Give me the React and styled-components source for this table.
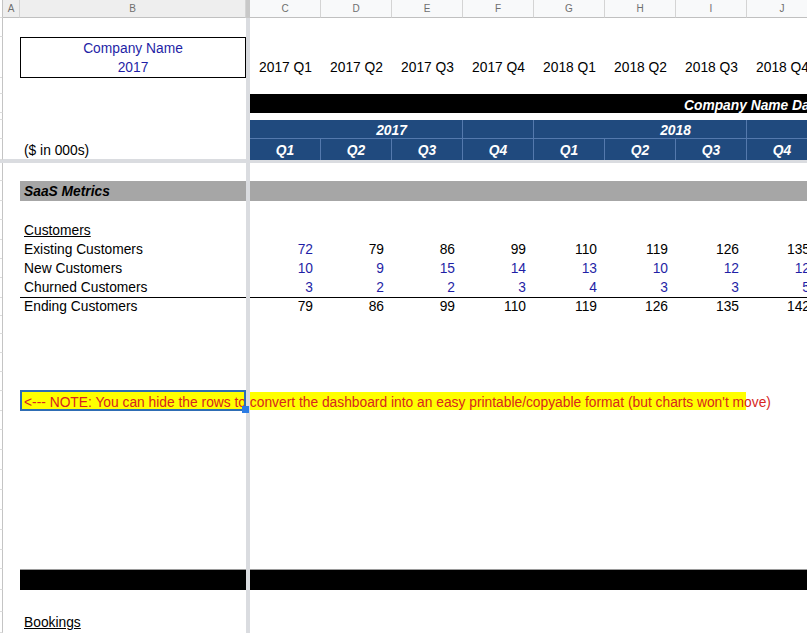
import React from 'react';
import styled, { createGlobalStyle } from 'styled-components';

const GlobalStyle = createGlobalStyle`
  html, body {
    margin: 0;
    padding: 0;
    background: #fff;
    overflow: hidden;
  }
  body {
    font-family: "Liberation Sans", Arial, sans-serif;
    font-size: 13.8px;
    color: #000;
  }
`;

const INPUT_BLUE = '#1f1fa6';
const NAVY = '#204a7e';
const NAVY_LINE = '#5479ad';

const columns = ['C', 'D', 'E', 'F', 'G', 'H', 'I', 'J'];
const periods = ['2017 Q1', '2017 Q2', '2017 Q3', '2017 Q4', '2018 Q1', '2018 Q2', '2018 Q3', '2018 Q4'];

const metrics = [
    { label: 'Existing Customers', values: [72, 79, 86, 99, 110, 119, 126, 135], inputs: 1 },
    { label: 'New Customers', values: [10, 9, 15, 14, 13, 10, 12, 12], inputs: 8 },
    { label: 'Churned Customers', values: [3, 2, 2, 3, 4, 3, 3, 5], inputs: 8, ruled: true },
    { label: 'Ending Customers', values: [79, 86, 99, 110, 119, 126, 135, 142], inputs: 0 },
];

const Sheet = styled.div`
    width: 807px;
    height: 633px;
    overflow: hidden;
    background: #fff;
`;

const Row = styled.div`
    display: grid;
    grid-template-columns: 3px 17px 226px 4px repeat(8, 71px);
    width: 818px;
    height: ${p => p.$h}px;
`;

const Stub = styled.div`
    grid-column: 1;
    grid-row: 1;
    border-right: 1px solid #c4c4c4;
    border-bottom: 1px solid #dcdcdc;
    box-sizing: border-box;
`;

const ColHead = styled.div`
    display: flex;
    align-items: center;
    justify-content: center;
    background: ${p => (p.$frozen ? '#eeeeee' : '#f8f9fa')};
    border-right: 1px solid #d4d4d4;
    border-bottom: 1px solid #c0c0c0;
    box-sizing: border-box;
    font-size: 10px;
    color: #6f6f6f;
`;

const Freeze = styled.div`
    grid-column: 4;
    grid-row: 1;
    background: ${p => (p.$head ? '#c8c8c8' : '#dadce0')};
    z-index: 1;
`;

const FreezeLine = styled.div`
    height: 4px;
    width: 807px;
    background: #dadce0;
`;

const Cell = styled.div`
    display: flex;
    align-items: center;
    justify-content: ${p => (p.$num ? 'flex-end' : 'flex-start')};
    padding: ${p => (p.$num ? '1px 8px 0 0' : `${p.$top ?? 1}px 0 0 4px`)};
    color: ${p => p.$color || '#000'};
    text-decoration: ${p => (p.$underline ? 'underline' : 'none')};
    border-bottom: ${p => (p.$ruled ? '1px solid #000' : 'none')};
    box-sizing: border-box;
    white-space: nowrap;
    line-height: 19px;
    min-width: 0;
`;

const TitleBox = styled.div`
    display: flex;
    flex-direction: column;
    align-items: center;
    justify-content: center;
    padding-top: 1px;
    border: 1px solid #000;
    color: ${INPUT_BLUE};
    line-height: 19px;
`;

const Period = styled.div`
    display: flex;
    align-items: flex-end;
    justify-content: center;
    padding-bottom: 1px;
    line-height: 19px;
    white-space: nowrap;
`;

const BlackBand = styled.div`
    grid-column: ${p => p.$span};
    background: #000;
    border-top: ${p => (p.$edge ? '1px solid #9a9a9a' : 'none')};
    color: #fff;
    font-weight: 700;
    font-style: italic;
    display: flex;
    align-items: center;
    padding: 3px 0 0 ${p => p.$indent || 0}px;
    white-space: nowrap;
    overflow: hidden;
`;

const YearCell = styled.div`
    grid-column: span 4;
    display: flex;
    align-items: center;
    justify-content: center;
    padding-top: 2px;
    background-color: ${NAVY};
    background-image: linear-gradient(to right, transparent 212px, ${NAVY_LINE} 212px, ${NAVY_LINE} 213px, transparent 213px);
    border-right: 1px solid ${NAVY_LINE};
    border-bottom: 1px solid ${NAVY_LINE};
    box-sizing: border-box;
    color: #fff;
    font-weight: 700;
    font-style: italic;
`;

const QuarterCell = styled.div`
    display: flex;
    align-items: center;
    justify-content: center;
    padding-top: 1px;
    background: ${NAVY};
    border-right: 1px solid ${NAVY_LINE};
    box-sizing: border-box;
    color: #fff;
    font-weight: 700;
    font-style: italic;
`;

const GrayBand = styled.div`
    grid-column: ${p => p.$span};
    background: #a6a6a6;
    display: flex;
    align-items: center;
    padding: 1px 0 0 ${p => (p.$label ? 4 : 0)}px;
    font-weight: 700;
    font-style: italic;
`;

const NoteText = styled.div`
    grid-column: 3 / -1;
    grid-row: 1;
    display: flex;
    align-items: center;
    padding: 3px 0 0 4px;
    color: #d7261e;
    white-space: nowrap;
    background: linear-gradient(to right, #ffff00 726px, transparent 726px);
    margin: 1px 0;
`;

const Selection = styled.div`
    grid-column: 3;
    grid-row: 1;
    position: relative;
    border: 2px solid #2e6db4;
    margin-top: -1px;
    z-index: 2;

    &::after {
        content: '';
        position: absolute;
        right: -5px;
        bottom: -4px;
        width: 7px;
        height: 7px;
        background: #2a7be4;
    }
`;

function BaseRow({ h, b, children }) {
    return (
        <Row $h={h}>
            <Stub />
            <Cell />
            {b || <Cell />}
            <Freeze />
            {children}
        </Row>
    );
}

function Blank({ h = 19 }) {
    return (
        <BaseRow h={h}>
            {columns.map(c => <Cell key={c} />)}
        </BaseRow>
    );
}

export default function App() {
    return (
        <Sheet>
            <GlobalStyle />

            <Row $h={18}>
                <Stub />
                <ColHead $frozen>A</ColHead>
                <ColHead $frozen>B</ColHead>
                <Freeze $head />
                {columns.map(c => <ColHead key={c}>{c}</ColHead>)}
            </Row>

            <Blank />

            <BaseRow h={38} b={<TitleBox><span>Company Name</span><span>2017</span></TitleBox>}>
                {periods.map(p => <Period key={p}>{p}</Period>)}
            </BaseRow>

            <Blank />

            <BaseRow h={19}>
                <BlackBand $span="5 / -1" $indent={434}>Company Name Dashboard</BlackBand>
            </BaseRow>

            <Blank h={7} />

            <BaseRow h={19}>
                <YearCell>2017</YearCell>
                <YearCell>2018</YearCell>
            </BaseRow>

            <BaseRow h={20} b={<Cell $top={2}>($ in 000s)</Cell>}>
                {columns.map((c, i) => <QuarterCell key={c}>Q{(i % 4) + 1}</QuarterCell>)}
            </BaseRow>

            <FreezeLine />

            <Blank h={18} />

            <Row $h={20}>
                <Stub />
                <Cell />
                <GrayBand $span="3" $label>SaaS Metrics</GrayBand>
                <Freeze />
                <GrayBand $span="5 / -1" />
            </Row>

            <Blank />

            <BaseRow h={19} b={<Cell $underline>Customers</Cell>}>
                {columns.map(c => <Cell key={c} />)}
            </BaseRow>

            {metrics.map(m => (
                <BaseRow key={m.label} h={19} b={<Cell $ruled={m.ruled}>{m.label}</Cell>}>
                    {m.values.map((v, i) => (
                        <Cell
                            key={columns[i]}
                            $num
                            $ruled={m.ruled}
                            $color={i < m.inputs ? INPUT_BLUE : '#000'}
                        >
                            {v}
                        </Cell>
                    ))}
                </BaseRow>
            ))}

            <Blank />
            <Blank />
            <Blank />
            <Blank />

            <Row $h={19}>
                <Stub />
                <Cell />
                <NoteText>
                    &lt;--- NOTE: You can hide the rows to convert the dashboard into an easy printable/copyable format (but charts won't move)
                </NoteText>
                <Freeze />
                <Selection />
            </Row>

            <Blank h={20} />
            <Blank h={20} />
            <Blank h={20} />
            <Blank h={20} />
            <Blank h={20} />
            <Blank h={20} />
            <Blank h={20} />
            <Blank h={19} />

            <Row $h={21}>
                <Stub />
                <Cell />
                <BlackBand $span="3" $edge />
                <Freeze />
                <BlackBand $span="5 / -1" $edge />
            </Row>

            <Blank h={22} />

            <BaseRow h={21} b={<Cell $underline $top={0}>Bookings</Cell>}>
                {columns.map(c => <Cell key={c} />)}
            </BaseRow>
        </Sheet>
    );
}
